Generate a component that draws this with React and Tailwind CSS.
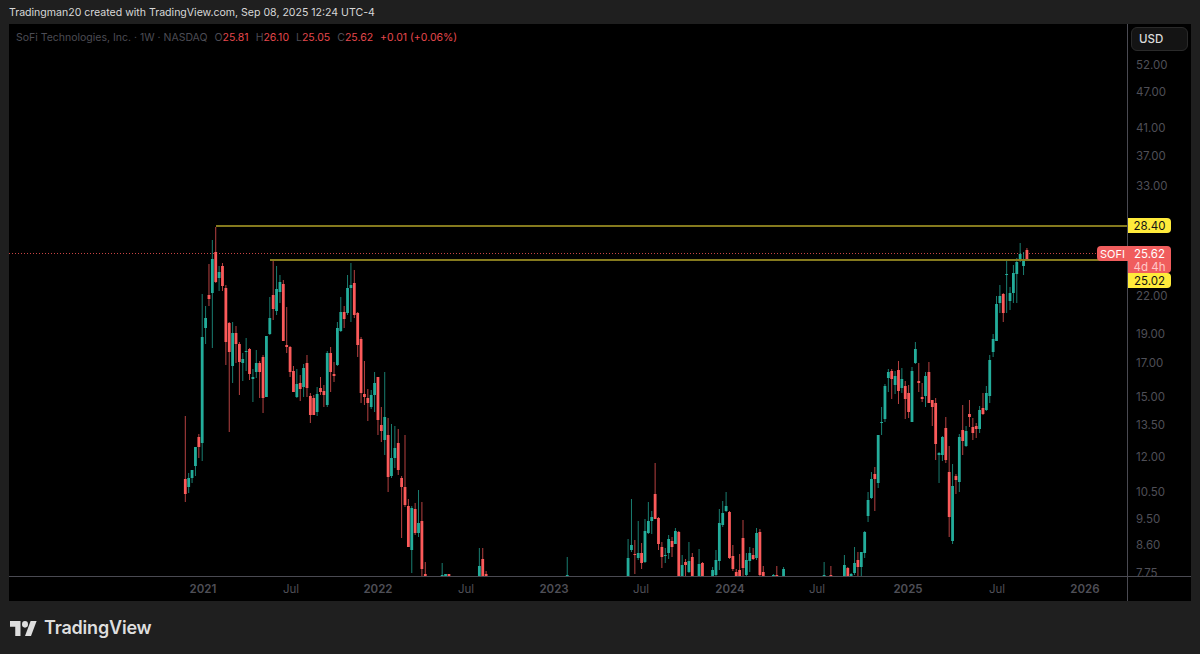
const GREEN = "#23ad9b";
const RED = "#fb5a5a";
const STEP = 3.38;
const X0 = 185.3;
const LEFT = 9;
const TOP = 24;

// [index of first candle, rows of [up, high, bodyTop, bodyBottom, low]] in screen px
const g = (h, t, b, l) => [1, h, t, b, l];
const r = (h, t, b, l) => [0, h, t, b, l];

const runs = [
  [0, [
    r(416, 479, 494, 502), g(473, 478, 487, 493), g(470, 470, 478, 483), g(447, 447, 466, 476),
    r(434, 437, 447, 458), g(294, 337, 443, 461), g(306, 318, 328, 344), r(264, 295, 299, 306),
    g(240, 259, 293, 348), r(227, 252, 282, 283), g(266, 272, 278, 291), r(263, 266, 286, 291),
    r(285, 288, 342, 365), r(322, 323, 352, 432), g(322, 333, 366, 383), r(326, 333, 344, 363),
    r(342, 344, 362, 395), g(353, 359, 363, 381), g(338, 351, 352, 371), r(348, 349, 374, 380),
    g(369, 377, 379, 402), g(350, 363, 372, 378), r(361, 363, 372, 398), r(355, 357, 398, 413),
    g(336, 336, 397, 397), g(297, 318, 334, 335), r(261, 295, 309, 320), g(266, 289, 311, 315),
    g(275, 282, 292, 303), r(280, 284, 341, 341), r(307, 345, 347, 353), r(346, 347, 372, 377),
    r(366, 371, 392, 392), g(369, 384, 397, 398), r(375, 383, 389, 401), g(364, 368, 387, 397),
    r(355, 363, 388, 397), r(393, 396, 415, 423), r(395, 398, 415, 415), g(387, 394, 412, 416),
    r(377, 388, 392, 395), r(385, 391, 395, 407), g(351, 353, 405, 407), r(347, 353, 372, 392),
    r(362, 374, 376, 382), g(322, 328, 365, 366), g(297, 312, 331, 332), r(306, 312, 319, 328),
    g(275, 288, 313, 315), g(263, 285, 288, 322), r(270, 283, 315, 318), r(312, 313, 345, 357),
    r(337, 339, 393, 403), r(361, 394, 397, 405), r(389, 398, 403, 421), g(390, 395, 407, 409),
    g(372, 383, 395, 412), r(377, 377, 420, 435), r(407, 425, 431, 442), g(372, 417, 440, 455),
    r(418, 435, 477, 492), g(424, 458, 476, 478), g(426, 448, 458, 468), r(429, 443, 470, 475),
    r(476, 478, 487, 538), r(435, 487, 505, 507), r(499, 506, 547, 547), g(506, 508, 550, 573),
    r(503, 509, 533, 535), g(490, 523, 533, 537), r(502, 521, 569, 576), r(562, 574, 576, 576),
  ]],
  [76, [g(563, 575, 576, 576), g(574, 574, 576, 576), r(574, 574, 576, 576)]],
  [87, [g(548, 566, 576, 576), r(548, 559, 576, 576), r(571, 574, 576, 576)]],
  [113, [g(557, 575, 576, 576)]],
  [131, [
    g(539, 558, 576, 576), g(499, 545, 550, 552), r(540, 554, 555, 574), g(521, 553, 558, 560),
    r(543, 553, 563, 569), g(519, 531, 562, 563), g(502, 521, 533, 534), g(511, 517, 521, 534),
    r(463, 494, 519, 519), r(517, 518, 544, 550), r(542, 547, 557, 568), g(548, 555, 556, 563),
    g(535, 539, 553, 559), r(537, 541, 547, 557), g(528, 531, 544, 544), r(531, 532, 576, 576),
    g(555, 565, 576, 576), r(559, 562, 565, 576), g(542, 561, 572, 573), r(553, 557, 576, 576),
  ]],
  [152, [g(549, 564, 576, 576), r(562, 563, 576, 576)]],
  [156, [
    g(567, 570, 576, 576), g(550, 560, 575, 576), g(509, 523, 561, 570), g(501, 513, 525, 527),
    g(492, 506, 511, 512), r(511, 512, 558, 559), r(545, 556, 569, 571), r(569, 572, 576, 576),
    r(554, 570, 576, 576), r(520, 538, 568, 576), g(553, 560, 575, 576), g(547, 553, 561, 572),
    r(548, 555, 559, 560), g(528, 533, 558, 560), r(529, 532, 575, 576), r(566, 572, 576, 576),
  ]],
  [174, [g(574, 575, 576, 576), r(566, 575, 576, 576)]],
  [177, [g(567, 569, 576, 576)]],
  [189, [g(562, 575, 576, 576)]],
  [191, [r(566, 575, 576, 576)]],
  [195, [
    g(555, 565, 576, 576), r(567, 568, 576, 576), g(573, 574, 576, 576), g(547, 563, 573, 575),
    r(552, 560, 567, 576), g(552, 552, 567, 576), g(531, 532, 553, 558), g(492, 500, 516, 522),
    g(472, 479, 498, 499), r(467, 474, 479, 511), g(435, 435, 483, 488), g(407, 422, 423, 435),
    g(384, 386, 419, 422), g(369, 372, 378, 392), r(369, 371, 379, 399), g(371, 376, 385, 394),
    r(361, 370, 391, 404), g(368, 379, 388, 393), r(381, 386, 399, 419), r(385, 393, 412, 418),
    g(367, 371, 422, 422), g(342, 349, 363, 364), r(363, 381, 383, 392), r(383, 397, 399, 402),
    g(372, 376, 396, 407), r(362, 372, 403, 403), r(400, 400, 407, 426), r(398, 403, 444, 460),
    g(452, 453, 455, 483), g(436, 437, 455, 461), r(417, 428, 460, 463), r(446, 472, 517, 537),
    g(464, 486, 541, 544), r(474, 476, 480, 494), g(434, 437, 482, 492), r(405, 430, 441, 455),
    g(426, 431, 446, 447), r(400, 414, 417, 427), r(418, 427, 433, 440), r(423, 426, 429, 438),
    g(406, 410, 429, 433), r(393, 408, 414, 415), g(386, 393, 410, 411), g(355, 360, 396, 403),
    g(334, 339, 352, 357), g(296, 304, 341, 341), g(285, 296, 303, 313), r(293, 294, 313, 322),
    g(259, 274, 275, 313), g(287, 293, 301, 310), g(265, 273, 293, 303), g(258, 262, 274, 303),
    g(243, 254, 261, 262), g(252, 261, 266, 275), r(248, 250, 259, 260),
  ]],
];

const candles = runs.flatMap(([start, rows]) =>
  rows.map((row, k) => ({ x: X0 + STEP * (start + k), up: row[0], h: row[1], t: row[2], b: row[3], l: row[4] }))
);

const prices = [
  ["52.00", 64], ["47.00", 91], ["41.00", 127], ["37.00", 155], ["33.00", 185], ["30.00", 223],
  ["22.00", 295], ["19.00", 333], ["17.00", 362], ["15.00", 396], ["13.50", 424], ["12.00", 456],
  ["10.50", 491], ["9.50", 518], ["8.60", 544], ["7.75", 572],
];

const times = [
  ["2021", 203, true], ["Jul", 291], ["2022", 378, true], ["Jul", 466], ["2023", 554, true], ["Jul", 641],
  ["2024", 730, true], ["Jul", 817], ["2025", 908, true], ["Jul", 997], ["2026", 1085, true],
];

function Chart() {
  return (
    <svg width="1118" height="552" viewBox={`${LEFT} ${TOP} 1118 552`} className="block">
      <line x1="9" x2="1127" y1="253.5" y2="253.5" stroke="#c84444" strokeWidth="1" strokeDasharray="1 2" />
      {candles.map((c, i) => {
        const color = c.up ? GREEN : RED;
        return (
          <g key={i}>
            <rect x={c.x - 0.5} y={c.h} width="1" height={Math.max(c.l - c.h, 0)} fill={color} opacity="0.72" />
            <rect x={c.x - 1.4} y={c.t} width="2.8" height={Math.max(c.b - c.t, 1)} fill={color} />
          </g>
        );
      })}
      <line x1="216" x2="1127" y1="226" y2="226" stroke="#857a1e" strokeWidth="2" />
      <line x1="270" x2="1127" y1="260" y2="260" stroke="#857a1e" strokeWidth="2" />
    </svg>
  );
}

function Legend() {
  const vals = [["O", "25.81"], ["H", "26.10"], ["L", "25.05"], ["C", "25.62"]];
  return (
    <div className="absolute left-[7px] top-[7px] flex items-center text-[10.5px] leading-[14px] text-[#4c4c54] whitespace-nowrap">
      <span>SoFi Technologies, Inc. · 1W · NASDAQ</span>
      {vals.map(([k, v]) => (
        <span key={k} className="ml-[7px]">
          {k}
          <span className="text-[#e5484d]">{v}</span>
        </span>
      ))}
      <span className="ml-[7px] text-[#e5484d]">+0.01 (+0.06%)</span>
    </div>
  );
}

function PriceAxis() {
  return (
    <div className="relative w-[63px] border-l border-[#4a4a52] text-[11.5px] leading-[14px] text-[#4f4f57]">
      <div className="absolute left-[3px] top-[3px] w-[57px] h-[24px] rounded-md border border-[#2a2a2a] bg-[#141414] pl-[7px] text-[11.5px] font-medium leading-[22px] text-[#dbdbdb]">
        USD
      </div>
      {prices.map(([label, y]) => (
        <div key={label} className="absolute left-[8px]" style={{ top: y - TOP - 6 }}>
          {label}
        </div>
      ))}
      <div className="absolute left-0 top-[194px] w-[43px] h-[15px] rounded-r-sm bg-[#ffeb3b] text-center text-[11.5px] leading-[16px] text-[#131313]">
        28.40
      </div>
      <div className="absolute left-0 top-[222px] w-[43px] h-[27px] rounded-r-sm bg-[#f05d5d] text-center text-[11.5px] leading-[13px] text-white pt-[2px]">
        25.62
        <div className="text-[#ffc9c9]">4d 4h</div>
      </div>
      <div className="absolute left-0 top-[249px] w-[43px] h-[15px] rounded-r-sm bg-[#ffeb3b] text-center text-[11.5px] leading-[16px] text-[#131313]">
        25.02
      </div>
      <div className="absolute left-[-31px] top-[222px] w-[31px] h-[15px] rounded-l-sm bg-[#f05d5d] text-center text-[11px] leading-[16px] text-white">
        SOFI
      </div>
    </div>
  );
}

function TimeAxis() {
  return (
    <div className="flex h-[25px] border-t border-[#4a4a52]">
      <div className="relative w-[1118px] text-[11.5px] leading-[14px] text-[#4f4f57]">
        {times.map(([label, x, year]) => (
          <span
            key={label + x}
            className={year ? "absolute top-[5px] -translate-x-1/2 font-semibold" : "absolute top-[5px] -translate-x-1/2"}
            style={{ left: x - LEFT }}
          >
            {label}
          </span>
        ))}
      </div>
      <div className="w-[63px] border-l border-[#4a4a52]" />
    </div>
  );
}

export default function App() {
  return (
    <div className="w-[1200px] h-[654px] overflow-hidden bg-[#1f1f1f] font-['Inter',sans-serif]">
      <div className="h-[24px] pl-[9px] pt-[6px] text-[10.55px] leading-[14px] text-[#d8d8d8]">
        Tradingman20 created with TradingView.com, Sep 08, 2025 12:24 UTC-4
      </div>
      <div className="mx-[9px] w-[1182px] h-[577px] bg-black flex flex-col">
        <div className="flex h-[552px]">
          <div className="relative w-[1118px] overflow-hidden">
            <Chart />
            <Legend />
          </div>
          <PriceAxis />
        </div>
        <TimeAxis />
      </div>
      <div className="flex items-center gap-[7px] pl-[10px] pt-[15px]">
        <svg width="27" height="15" viewBox="0 4 36 18" fill="#dedede" preserveAspectRatio="none">
          <path d="M14 22H7V11H0V4h14v18zM28 22h-8l7.5-18h8L28 22z" />
          <circle cx="20" cy="8" r="4" />
        </svg>
        <span className="text-[18px] font-semibold leading-[24px] tracking-[-0.2px] text-[#dedede]">TradingView</span>
      </div>
    </div>
  );
}
